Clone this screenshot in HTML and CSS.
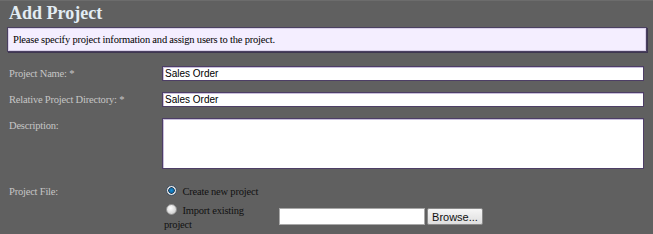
FILE: index.html
```html
<!DOCTYPE html>
<html lang="en">
<head>
    <meta charset="UTF-8">
    <title>Add Project</title>
    <link rel="stylesheet" href="styles.css">
</head>
<body>
    <div class="page">
        <h1>Add Project</h1>
        <div class="info">Please specify project information and assign users to the project.</div>

        <table class="form">
            <tr>
                <td class="label">Project Name: *</td>
                <td><input type="text" class="field" value="Sales Order"></td>
            </tr>
            <tr>
                <td class="label">Relative Project Directory: *</td>
                <td><input type="text" class="field" value="Sales Order"></td>
            </tr>
            <tr>
                <td class="label">Description:</td>
                <td><textarea class="field area"></textarea></td>
            </tr>
            <tr>
                <td class="label">Project File:</td>
                <td>
                    <table class="choices">
                        <tr class="first">
                            <td class="choice"><label><input type="radio" name="pf" checked> Create new project</label></td>
                            <td></td>
                        </tr>
                        <tr>
                            <td class="choice"><label><input type="radio" name="pf"> Import existing project</label></td>
                            <td class="upload">
                                <input type="text" class="path"><button class="browse">Browse...</button>
                            </td>
                        </tr>
                    </table>
                </td>
            </tr>
        </table>
    </div>
</body>
</html>
```

FILE: styles.css
```css
body {
    margin: 0;
    background: #606060;
    font-family: 'Liberation Serif', 'Times New Roman', serif;
    font-size: 10.5px;
    letter-spacing: -0.2px;
}

.page {
    border-top: 1px solid #6c6c6c;
    padding: 0 6px 0 7px;
}

h1 {
    margin: 0;
    padding: 0 0 0 2px;
    height: 26px;
    line-height: 24px;
    font-size: 18px;
    letter-spacing: 0;
    font-weight: bold;
    color: #e2ecf4;
}

.info {
    background: #f4eeff;
    border: 1px solid #4a4060;
    box-shadow: inset 0 0 0 1px #d8cfe8, 1px 1px 0 #3e3650;
    padding: 6px 5px 5px 5px;
    line-height: 12px;
    color: #000;
}

.form {
    border-collapse: collapse;
    width: 637px;
    margin-top: 14px;
}

.form td {
    padding: 0;
    vertical-align: top;
}

.label {
    width: 155px;
    padding: 1px 0 0 2px !important;
    line-height: 13px;
    height: 25px;
    color: #c6c6c6;
}

.field {
    box-sizing: border-box;
    width: 482px;
    height: 15px;
    margin: 0;
    padding: 0 2px;
    border: 1px solid #4d3e66;
    box-shadow: inset 1px 1px 0 #c9bfdc;
    background: #fff;
    font-family: 'Liberation Sans', Arial, sans-serif;
    font-size: 10px;
    letter-spacing: 0;
    color: #000;
    display: block;
}

.area {
    height: 51px;
    resize: none;
    margin-bottom: 15px;
}

.choices {
    border-collapse: collapse;
}

.choice {
    width: 90px;
    color: #111;
    line-height: 14px;
    padding: 0 25px 0 2px !important;
}

.first .choice {
    padding: 1px 0 5px 2px !important;
    white-space: nowrap;
}

.choice input {
    appearance: none;
    -webkit-appearance: none;
    box-sizing: border-box;
    width: 11px;
    height: 11px;
    margin: 0 3px 0 2px;
    border: 1px solid #8c8c8c;
    border-radius: 50%;
    background: radial-gradient(circle at 40% 35%, #ffffff, #d4d4d4 70%, #bdbdbd);
    vertical-align: -1px;
}

.choice input:checked {
    border-color: #3a4e63;
    background: radial-gradient(circle, #1a8fd6 0, #0f6eab 2px, #2a3e55 3px, #e8e8e8 3.5px, #cfcfcf);
}

.upload {
    padding-top: 4px !important;
    white-space: nowrap;
}

.path {
    box-sizing: border-box;
    width: 146px;
    height: 17px;
    border: 1px solid #a8a8a8;
    background: #fff;
    margin: 0;
    vertical-align: top;
}

.browse {
    box-sizing: border-box;
    height: 17px;
    width: 56px;
    margin: 0 0 0 2px;
    padding: 0;
    border: 1px solid #8a8a8a;
    border-radius: 2px;
    background: linear-gradient(#f6f6f6, #dedede);
    font-family: 'Liberation Sans', Arial, sans-serif;
    font-size: 11px;
    letter-spacing: 0;
    color: #111;
    vertical-align: top;
}
```
